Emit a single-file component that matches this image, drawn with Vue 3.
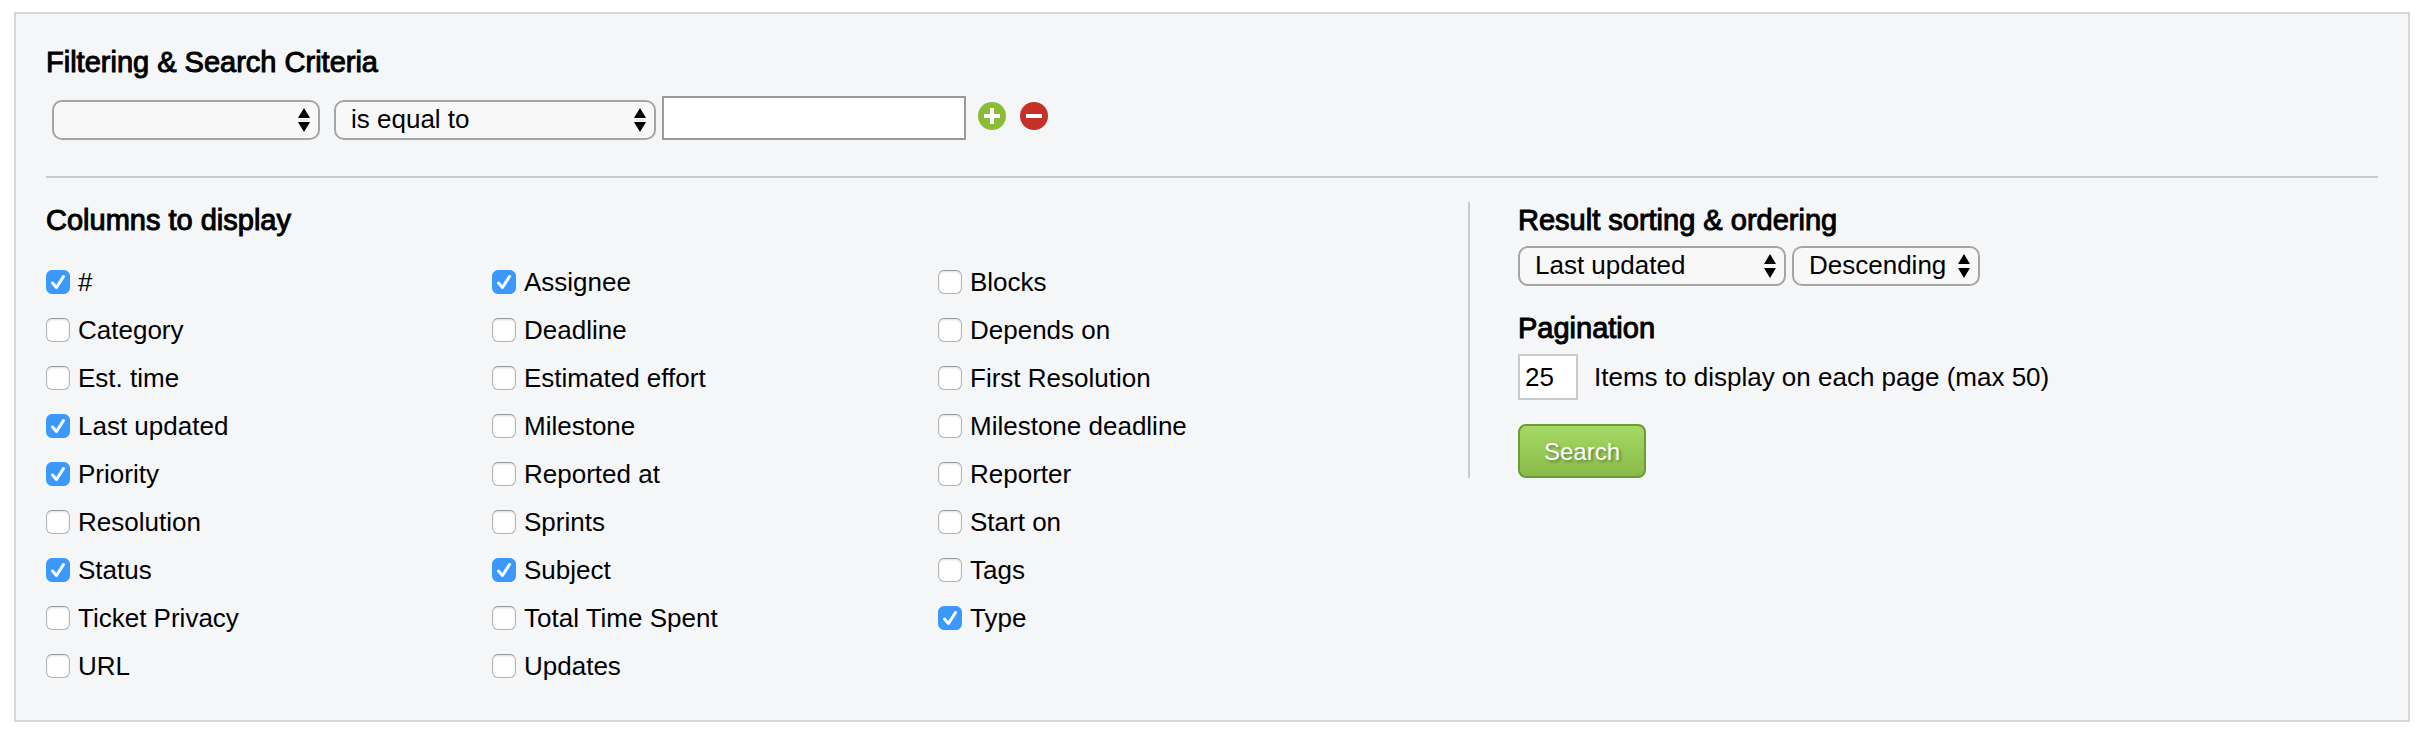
<script setup>
import { ref } from 'vue'

const columns = ref([
  ['#', true], ['Assignee', true], ['Blocks', false],
  ['Category', false], ['Deadline', false], ['Depends on', false],
  ['Est. time', false], ['Estimated effort', false], ['First Resolution', false],
  ['Last updated', true], ['Milestone', false], ['Milestone deadline', false],
  ['Priority', true], ['Reported at', false], ['Reporter', false],
  ['Resolution', false], ['Sprints', false], ['Start on', false],
  ['Status', true], ['Subject', true], ['Tags', false],
  ['Ticket Privacy', false], ['Total Time Spent', false], ['Type', true],
  ['URL', false], ['Updates', false],
].map(([label, checked]) => ({ label, checked })))

const field = ref('')
const operator = ref('is equal to')
const term = ref('')
const sortBy = ref('Last updated')
const direction = ref('Descending')
const perPage = ref('25')
</script>

<template>
  <form class="panel" @submit.prevent>
    <section class="filters">
      <h2>Filtering &amp; Search Criteria</h2>
      <div class="criteria">
        <span class="select field">
          <select v-model="field" aria-label="Field"><option value=""></option></select>
          <svg viewBox="0 0 12 24" aria-hidden="true"><path d="M6 0 12 10H0zM6 24 0 14h12z" /></svg>
        </span>
        <span class="select operator">
          <select v-model="operator" aria-label="Operator"><option>is equal to</option></select>
          <svg viewBox="0 0 12 24" aria-hidden="true"><path d="M6 0 12 10H0zM6 24 0 14h12z" /></svg>
        </span>
        <input v-model="term" class="term" type="text" aria-label="Value">
        <button type="button" class="icon" aria-label="Add criterion">
          <svg viewBox="0 0 28 28"><circle cx="14" cy="14" r="14" fill="#8abd36" /><path d="M14 6v16M6 14h16" stroke="#fff" stroke-width="4" /></svg>
        </button>
        <button type="button" class="icon" aria-label="Remove criterion">
          <svg viewBox="0 0 28 28"><circle cx="14" cy="14" r="14" fill="#c53028" /><path d="M6 14h16" stroke="#fff" stroke-width="4" /></svg>
        </button>
      </div>
    </section>

    <div class="lower">
      <section class="columns">
        <h2>Columns to display</h2>
        <div class="grid">
          <label v-for="c in columns" :key="c.label">
            <span class="tick">
              <input v-model="c.checked" type="checkbox">
              <svg viewBox="0 0 24 24" aria-hidden="true"><path d="M6.500 13l4 4.500 7-11" /></svg>
            </span>
            {{ c.label }}
          </label>
        </div>
      </section>

      <section class="options">
        <h2>Result sorting &amp; ordering</h2>
        <div class="sorting">
          <span class="select field">
            <select v-model="sortBy" aria-label="Sort by"><option>Last updated</option></select>
            <svg viewBox="0 0 12 24" aria-hidden="true"><path d="M6 0 12 10H0zM6 24 0 14h12z" /></svg>
          </span>
          <span class="select direction">
            <select v-model="direction" aria-label="Direction"><option>Descending</option></select>
            <svg viewBox="0 0 12 24" aria-hidden="true"><path d="M6 0 12 10H0zM6 24 0 14h12z" /></svg>
          </span>
        </div>
        <h2>Pagination</h2>
        <div class="paging">
          <input id="per-page" v-model="perPage" type="text">
          <label for="per-page">Items to display on each page (max 50)</label>
        </div>
        <button type="submit" class="search">Search</button>
      </section>
    </div>
  </form>
</template>

<style>
body {
  background: #fff;
}
</style>

<style scoped>
* {
  box-sizing: border-box;
}
.panel {
  margin: 12px 14px;
  padding: 30px;
  border: 2px solid #d6d7d8;
  background: #f5f6f8;
  color: #000;
  font: 26px/32px "Liberation Sans", Arial, Helvetica, sans-serif;
}
input,
select,
button {
  margin: 0;
  color: #000;
  font: inherit;
}
h2 {
  margin: 0;
  font-size: 29px;
  font-weight: 400;
  line-height: 36px;
  -webkit-text-stroke: 1px #000;
}
.filters {
  padding-bottom: 36px;
  border-bottom: 2px solid #c9cacc;
}
.criteria {
  display: flex;
  align-items: flex-end;
  padding: 16px 0 0 6px;
}
.select {
  position: relative;
  display: block;
  height: 40px;
}
.select select {
  display: block;
  width: 100%;
  height: 40px;
  padding: 0 15px 2px;
  border: 2px solid #a5a5a5;
  border-radius: 10px;
  background: #f8f8f8;
  appearance: none;
}
.select svg {
  position: absolute;
  top: 8px;
  right: 10px;
  width: 12px;
  height: 24px;
  pointer-events: none;
}
.field {
  width: 268px;
}
.operator {
  width: 322px;
  margin: 0 6px 0 14px;
}
.direction {
  width: 188px;
}
.term {
  width: 304px;
  height: 44px;
  padding: 0 6px;
  border: 2px solid #999;
  background: #fff;
}
.icon {
  width: 28px;
  height: 28px;
  margin: 0 2px 10px 12px;
  padding: 0;
  border: 0;
  background: none;
}
.icon svg {
  display: block;
}
.lower {
  display: grid;
  grid-template-columns: minmax(0, 1422fr) minmax(0, 910fr);
  align-items: start;
  padding-top: 24px;
}
.grid {
  display: grid;
  grid-template-columns: repeat(3, 1fr);
  padding: 20px 84px 0 0;
}
.grid label {
  display: flex;
  align-items: center;
  gap: 8px;
  height: 48px;
}
.tick {
  position: relative;
  width: 24px;
  height: 24px;
}
.tick input {
  display: block;
  width: 24px;
  height: 24px;
  border: 1px solid #b4b4b4;
  border-top-color: #999;
  border-radius: 6px;
  background: #fff;
  box-shadow: inset 0 1px 2px #ddd;
  appearance: none;
}
.tick input:checked {
  border-color: #3b99fc;
  background: #3b99fc;
  box-shadow: none;
}
.tick svg {
  position: absolute;
  inset: 0;
  fill: none;
  stroke: #fff;
  stroke-width: 3;
  stroke-linecap: round;
  stroke-linejoin: round;
  pointer-events: none;
}
.tick input:not(:checked) + svg {
  display: none;
}
.options {
  padding-left: 48px;
  border-left: 2px solid #c9cacc;
}
.sorting {
  display: flex;
  gap: 6px;
  padding: 8px 0 24px;
}
.paging {
  display: flex;
  align-items: center;
  gap: 16px;
  padding: 8px 0 24px;
}
.paging input {
  width: 60px;
  height: 46px;
  padding: 0 5px;
  border: 2px solid #c9cacc;
  background: #fff;
}
.search {
  display: block;
  height: 54px;
  padding: 2px 24px 0;
  border: 2px solid #6c9a33;
  border-radius: 8px;
  background: linear-gradient(#a5d864, #8abb4a);
  color: #fff;
  font-size: 24px;
  text-shadow: 2px 2px 3px #0005;
}
</style>
